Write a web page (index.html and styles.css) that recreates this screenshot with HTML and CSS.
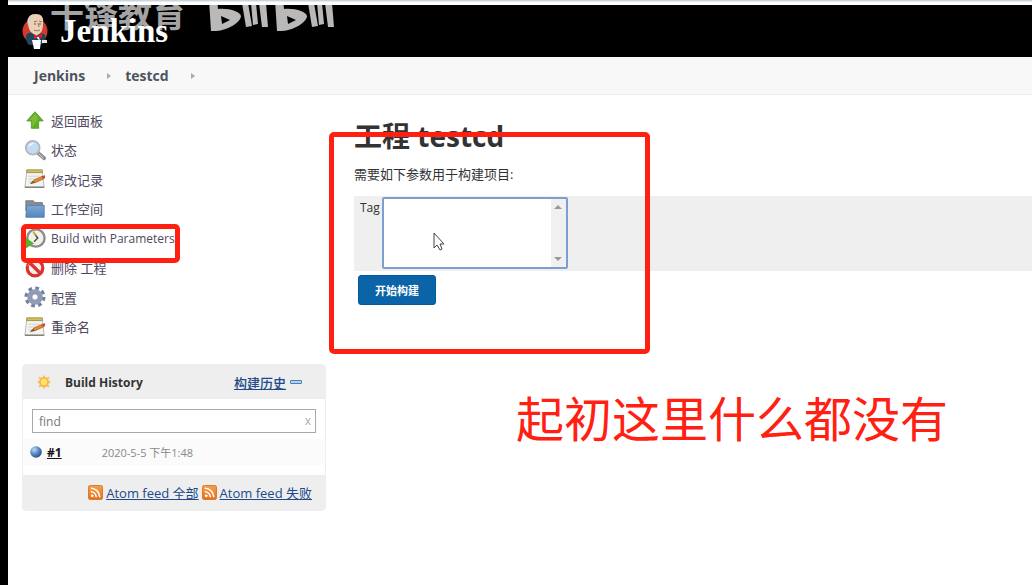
FILE: index.html
```html
<!DOCTYPE html>
<html lang="zh-CN">
<head>
    <meta charset="UTF-8">
    <meta name="viewport" content="width=device-width, initial-scale=1.0">
    <title>testcd [Jenkins]</title>
    <link rel="stylesheet" href="styles.css">
</head>
<body>
    <!-- shared icons -->
    <svg class="defs" width="0" height="0" aria-hidden="true">
        <defs>
            <linearGradient id="blue" x1="0" y1="0" x2="0" y2="1">
                <stop offset="0" stop-color="#7fa9d6"/>
                <stop offset="1" stop-color="#5586bd"/>
            </linearGradient>
            <linearGradient id="orange" x1="0" y1="0" x2="0" y2="1">
                <stop offset="0" stop-color="#f6a04a"/>
                <stop offset="1" stop-color="#e4701a"/>
            </linearGradient>
            <radialGradient id="ball" cx="0.35" cy="0.3" r="0.7">
                <stop offset="0" stop-color="#c5dcf2"/>
                <stop offset="0.5" stop-color="#5f92c8"/>
                <stop offset="1" stop-color="#2c5688"/>
            </radialGradient>
        </defs>
        <symbol id="notepad" viewBox="0 0 24 24">
            <path d="M3 4h17l2 17H1z" fill="#f3f3f0" stroke="#b4b4ae"/>
            <path d="M3 2h17v3H3z" fill="#d2bf55" stroke="#9c9350"/>
            <path d="M5 9h12M5 12h9M5 15h5" stroke="#cfcfca"/>
            <path d="M1 21h21" stroke="#7d7d78" stroke-width="1.5"/>
            <path d="M7 17l4-4 9-4 1 3-9 4z" fill="#e58a30" stroke="#a7561b" stroke-width="0.8"/>
            <path d="M19 9l4-1v3l-2 1z" fill="#c84a3c"/>
            <path d="M7 17l3-3 2 2z" fill="#6b5a48"/>
        </symbol>
        <symbol id="rss" viewBox="0 0 16 16">
            <rect x="0.5" y="0.5" width="15" height="15" rx="2" fill="url(#orange)" stroke="#dc7424"/>
            <circle cx="4.5" cy="11.5" r="1.5" fill="#fff"/>
            <path d="M3 7.2a6 6 0 0 1 5.8 5.8M3 3.5a9.5 9.5 0 0 1 9.5 9.5" fill="none" stroke="#fff" stroke-width="1.7"/>
        </symbol>
    </svg>

    <div class="page">
        <div class="browser-edge"></div>

        <header class="header">
            <a class="logo" href="#">
                <svg class="logo-head" viewBox="0 0 26 36" aria-hidden="true">
                    <circle cx="13" cy="18" r="12.5" fill="#d33833"/>
                    <path d="M4 22c3-4 14-4 19 0l1 7-6 3H7c-3-2-3-7-3-10z" fill="#20445a"/>
                    <path d="M6 10C6 4 9 1 14 1c6 0 8 4 7 10 0 6-2 10-6 11-5 0-9-5-9-12z" fill="#ecd0b3"/>
                    <path d="M6 12c-2-6 1-10 6-11-2 3-4 5-5 11z" fill="#d7d3cc"/>
                    <path d="M12 9l3-1M17 8l3 1M12 17c2 1 4 1 6 0M16 10l1 4" fill="none" stroke="#8c705b"/>
                    <circle cx="13" cy="11" r="0.8" fill="#444"/>
                    <circle cx="18" cy="11" r="0.8" fill="#444"/>
                    <path d="M12 20l5 4 1 4-5-5z" fill="#fff"/>
                    <path d="M12 21l4 2 4-3v5l-4-1-4 2z" fill="#d8232a"/>
                    <path d="M10 27h9l-1 9h-6z" fill="#fff"/>
                    <path d="M20 27h5v3h-5z" fill="#f1e5dc"/>
                </svg>
                <span class="logo-text">Jenkins</span>
            </a>
            <div class="watermark">
                <span class="watermark-name">千锋教育</span>
                <svg class="watermark-logo" viewBox="0 0 126 32" aria-hidden="true">
                    <g id="bili" fill="#b9b9b9">
                        <path fill-rule="evenodd" d="M0 0h8l1 9c12-1 22 3 23 7 0 6-14 16-30 15zM12 16l1 8 8-4z"/>
                        <path d="M33 3h6l4 23-6 1zM42 3h5l2 21-5 1zM50 3h7l2 24h-6z"/>
                    </g>
                    <use href="#bili" x="66"/>
                </svg>
            </div>
        </header>

        <nav class="breadcrumbs">
            <a href="#">Jenkins</a>
            <span class="crumb-arrow"></span>
            <a href="#">testcd</a>
            <span class="crumb-arrow"></span>
        </nav>

        <div class="content">
            <aside class="side-panel">
                <nav class="tasks">
                    <a class="task" href="#">
                        <svg viewBox="0 0 24 24"><path d="M12 3l9 10h-5v8H8v-8H3z" fill="#5eae20" stroke="#5c9c34"/><path d="M12 5l4 5-7 10V12H6z" fill="#78be38"/></svg>
                        返回面板
                    </a>
                    <a class="task" href="#">
                        <svg viewBox="0 0 24 24"><path d="M15 15l7 6" stroke="#8f8f8f" stroke-width="4" stroke-linecap="round"/><path d="M16 16l5 5" stroke="#ddd" stroke-width="1"/><circle cx="9.5" cy="9.5" r="7.5" fill="#c3dcf5" stroke="#b3b7bf" stroke-width="2"/><path d="M5 9c0-4 4-5 7-4-3 0-5 2-7 4z" fill="#fff"/></svg>
                        状态
                    </a>
                    <a class="task" href="#">
                        <svg><use href="#notepad"/></svg>
                        修改记录
                    </a>
                    <a class="task" href="#">
                        <svg viewBox="0 0 24 24"><path d="M2 3h8l2 2h8v9H2z" fill="#8b8e90" stroke="#74797d"/><path d="M2 21L3 8h19v13z" fill="url(#blue)" stroke="#4f7fb5"/></svg>
                        工作空间
                    </a>
                    <a class="task" href="#">
                        <svg viewBox="0 0 24 24"><circle cx="13" cy="12" r="9.5" fill="#f1f1e7" stroke="#8b8b90" stroke-width="2.5"/><path d="M11 7l4 5-4 4" fill="none" stroke="#444" stroke-width="1.5"/><path d="M10 5l3 4" stroke="#d7aa34" stroke-width="2"/><path d="M1 11l10 7-10 6z" fill="#52b52a"/></svg>
                        <span class="latin">Build with Parameters</span>
                    </a>
                    <a class="task" href="#">
                        <svg viewBox="0 0 24 24"><circle cx="12" cy="12" r="8.5" fill="#f8eded" stroke="#d8332f" stroke-width="3.5"/><path d="M6 6l12 12" stroke="#d8332f" stroke-width="3.5"/><path d="M4 10c1-4 5-6 9-6" fill="none" stroke="#ef817d"/></svg>
                        删除 工程
                    </a>
                    <a class="task" href="#">
                        <svg viewBox="0 0 24 24"><circle cx="12" cy="12" r="9.5" fill="none" stroke="#75829f" stroke-width="4" stroke-dasharray="4 3.46"/><circle cx="12" cy="12" r="6" fill="none" stroke="#909bb7" stroke-width="5"/><circle cx="12" cy="12" r="3.5" fill="#fff" stroke="#75809b"/></svg>
                        配置
                    </a>
                    <a class="task" href="#">
                        <svg><use href="#notepad"/></svg>
                        重命名
                    </a>
                </nav>

                <section class="history">
                    <div class="history-head">
                        <svg class="sun" viewBox="0 0 16 16"><path d="M8 0l2 3 4-1-1 4 3 2-3 2 1 4-4-1-2 3-2-3-4 1 1-4-3-2 3-2-1-4 4 1z" fill="#f7bd5a"/><circle cx="8" cy="8" r="4.5" fill="#ffe36a" stroke="#f3a941"/></svg>
                        <span class="history-title">Build History</span>
                        <a class="trend" href="#">构建历史</a>
                        <button class="collapse" type="button" aria-label="collapse"></button>
                    </div>
                    <div class="history-search">
                        <input type="text" placeholder="find" aria-label="find">
                        <button class="clear" type="button">x</button>
                    </div>
                    <div class="build">
                        <svg class="ball" viewBox="0 0 12 12"><circle cx="6" cy="6" r="5.8" fill="url(#ball)"/></svg>
                        <a class="build-number" href="#">#1</a>
                        <span class="build-date">2020-5-5 下午1:48</span>
                    </div>
                    <div class="history-foot">
                        <svg class="rss"><use href="#rss"/></svg>
                        <a href="#">Atom feed 全部</a>
                        <svg class="rss"><use href="#rss"/></svg>
                        <a href="#">Atom feed 失败</a>
                    </div>
                </section>
            </aside>

            <main class="main-panel">
                <h1>工程 testcd</h1>
                <p class="intro">需要如下参数用于构建项目:</p>
                <form>
                    <div class="param">
                        <label for="tag">Tag</label>
                        <div class="list">
                            <select id="tag" size="5"></select>
                            <div class="scrollbar"><span class="up"></span><span class="down"></span></div>
                        </div>
                    </div>
                    <button class="submit" type="button">开始构建</button>
                </form>
            </main>
        </div>
    </div>

    <!-- annotations -->
    <div class="mark mark-task"></div>
    <div class="mark mark-form"></div>
    <div class="note">起初这里什么都没有</div>
    <svg class="cursor" viewBox="0 0 12 19" aria-hidden="true"><path d="M1 1v15l3-3 3 5 2-1-2-5h4z" fill="#fff" stroke="#444"/></svg>
</body>
</html>
```
FILE: styles.css
```css
* {
    box-sizing: border-box;
}

body {
    margin: 0;
    background-color: #000;
    color: #333;
    font-family: "Open Sans", "Noto Sans CJK SC", sans-serif;
    font-size: 12px;
    position: relative;
}

button, input, select {
    font-family: inherit;
}

.defs {
    position: absolute;
}

.page {
    margin-left: 8px;
    min-height: 100vh;
    background-color: #fff;
}

.browser-edge {
    height: 5px;
    background: linear-gradient(to bottom, #c9d4dc 0, #c9d4dc 1px, #fff 2px);
}

.latin {
    font-size: 12px;
}

/* header */
.header {
    position: relative;
    height: 52px;
    background-color: #000;
    overflow: hidden;
}

.logo {
    position: relative;
    z-index: 1;
    display: flex;
    align-items: center;
    gap: 12px;
    height: 52px;
    padding-left: 14px;
    text-decoration: none;
}

.logo-head {
    width: 26px;
    height: 36px;
}

.logo-text {
    color: #fff;
    font-family: "Liberation Serif", serif;
    font-size: 33px;
    font-weight: bold;
    line-height: 34px;
}

.watermark {
    position: absolute;
    top: -9px;
    left: 42px;
    display: flex;
    gap: 23px;
    align-items: flex-start;
    color: #a4a4a4;
}

.watermark-name {
    font-family: "Noto Sans CJK SC", sans-serif;
    font-size: 34px;
    font-weight: bold;
    line-height: 34px;
}

.watermark-logo {
    width: 126px;
    height: 32px;
    margin-top: 4px;
}

/* breadcrumbs */
.breadcrumbs {
    display: flex;
    align-items: center;
    height: 38px;
    padding-left: 26px;
    background-color: #f8f8f8;
    border-bottom: 1px solid #eee;
    font-size: 14px;
    font-weight: bold;
}

.breadcrumbs a {
    color: #4d545d;
    text-decoration: none;
}

.crumb-arrow {
    margin: 0 14px 0 22px;
    border: 3px solid transparent;
    border-left: 4px solid #aaa;
    border-right: 0;
}

.content {
    display: flex;
    padding-left: 14px;
}

/* side panel */
.side-panel {
    flex: 0 0 304px;
    padding-top: 11px;
}

.tasks {
    display: grid;
    grid-auto-rows: 1fr;
    height: 236px;
    font-size: 13px;
}

.task {
    display: flex;
    align-items: center;
    gap: 5px;
    padding: 0 0 1px 2px;
    color: #4f4860;
    text-decoration: none;
}

.task svg {
    width: 22px;
    height: 22px;
}

.history {
    margin-top: 22px;
    border: 1px solid #eee;
    border-radius: 4px;
    overflow: hidden;
}

.history-head {
    display: flex;
    align-items: center;
    height: 34px;
    padding: 0 23px 0 14px;
    background-color: #eee;
    font-size: 13px;
}

.sun {
    width: 14px;
    height: 14px;
}

.history-title {
    margin-left: 14px;
    font-size: 12px;
    font-weight: bold;
}

.trend {
    margin-left: auto;
    color: #204a87;
    font-weight: 500;
}

.collapse {
    width: 12px;
    height: 4px;
    margin-left: 4px;
    padding: 0;
    border: 1px solid #4b7fb8;
    border-radius: 1px;
    background-color: #b5d3ef;
}

.history-search {
    position: relative;
    padding: 10px 9px 6px;
}

.history-search input {
    display: block;
    width: 100%;
    height: 24px;
    padding: 0 6px;
    border: 1px solid #aaa;
    color: #666;
    font-size: 12px;
}

.history-search input::placeholder {
    color: #777;
}

.clear {
    position: absolute;
    top: 11px;
    right: 12px;
    height: 20px;
    padding: 0 2px;
    border: 0;
    background: none;
    color: #aaa;
    font-size: 12px;
}

.build {
    display: flex;
    align-items: center;
    height: 26px;
    margin-bottom: 10px;
    padding-left: 7px;
    background-color: #fbfbfb;
}

.ball {
    width: 12px;
    height: 12px;
}

.build-number {
    margin-left: 5px;
    color: #111;
    font-size: 12px;
    font-weight: bold;
}

.build-date {
    margin-left: 40px;
    color: #888;
    font-size: 11px;
}

.history-foot {
    display: flex;
    align-items: center;
    justify-content: flex-end;
    gap: 3px;
    height: 35px;
    padding-right: 13px;
    background-color: #eee;
    font-size: 13px;
}

.history-foot a {
    color: #204a87;
}

.rss {
    width: 15px;
    height: 15px;
}

/* main panel */
.main-panel {
    flex: 1;
    padding: 24px 0 0 28px;
}

h1 {
    margin: 0;
    font-size: 28px;
    line-height: 34px;
}

.intro {
    margin: 11px 0 12px;
    font-size: 13px;
    line-height: 20px;
}

.param {
    display: flex;
    align-items: flex-start;
    gap: 2px;
    height: 75px;
    padding: 1px 6px;
    background-color: #efefef;
}

.param label {
    line-height: 22px;
}

.list {
    position: relative;
    width: 186px;
}

.list select {
    display: block;
    width: 100%;
    height: 72px;
    border: 2px solid #7c9fd2;
    border-radius: 2px;
    background-color: #fff;
}

.scrollbar {
    position: absolute;
    top: 2px;
    right: 2px;
    bottom: 2px;
    display: flex;
    flex-direction: column;
    justify-content: space-between;
    align-items: center;
    width: 15px;
    padding: 6px 0;
    background-color: #f0f0f0;
}

.up, .down {
    border: 4px solid transparent;
}

.up {
    border-top: 0;
    border-bottom-color: #999;
}

.down {
    border-bottom: 0;
    border-top-color: #999;
}

.submit {
    display: block;
    width: 78px;
    height: 30px;
    margin: 4px 0 0 4px;
    padding: 0;
    border: 1px solid #005a9c;
    border-radius: 3px;
    background-color: #0b63a8;
    color: #fff;
    font-size: 11px;
    font-weight: bold;
}

/* annotations over the page */
.mark {
    position: absolute;
    border: 5px solid #ff2012;
    border-radius: 5px;
}

.mark-task {
    top: 224px;
    left: 21px;
    width: 159px;
    height: 39px;
}

.mark-form {
    top: 132px;
    left: 329px;
    width: 321px;
    height: 222px;
}

.note {
    position: absolute;
    top: 386px;
    left: 516px;
    color: #ff2012;
    font-family: "Noto Sans CJK SC", sans-serif;
    font-size: 48px;
    line-height: 60px;
    white-space: nowrap;
}

.cursor {
    position: absolute;
    top: 232px;
    left: 433px;
    width: 12px;
    height: 19px;
}
```
